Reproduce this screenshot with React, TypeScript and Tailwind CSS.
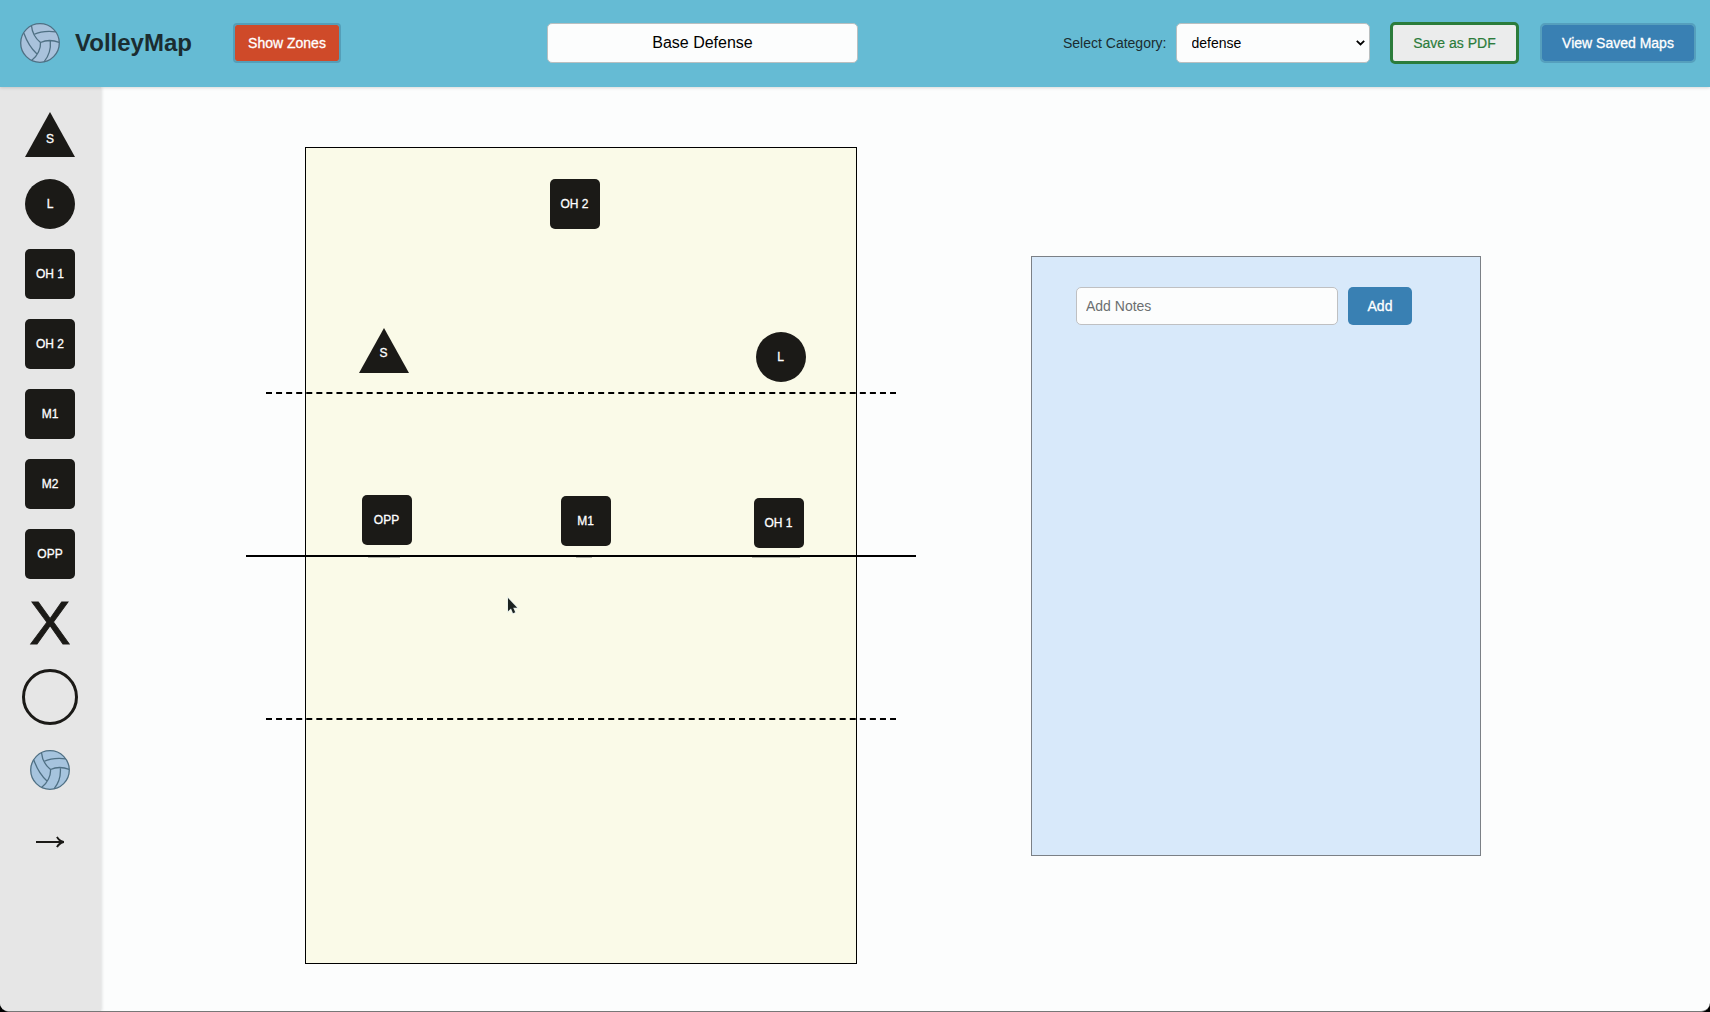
import React from "react";

function Volleyball({ fill }: { fill: string }) {
  return (
    <svg width="40" height="40" viewBox="0 0 40 40" fill="none" stroke="#4f7084" strokeWidth="1.3" className="block shrink-0">
      <circle cx="20" cy="20" r="19.3" fill={fill} />
      <path d="M11.5 2.7C12 8.5 15 15 20.5 19.5M20.5 19.5C21 25.5 17.5 33 11.8 37.3M20.5 19.5C26.5 16.8 33 17 39.2 19.4M13.8 11.5C20 8.6 28.5 7.8 35.8 8.8M3.8 10C6.5 17.5 11.5 26 17 31M30.3 17.6C31 25.5 28.5 33.5 24 38.8" />
    </svg>
  );
}

type Kind = "triangle" | "circle" | "square";

function Token({ kind, label, raised = false }: { kind: Kind; label: string; raised?: boolean }) {
  if (kind === "triangle") {
    return (
      <div className="relative h-[45px] w-[50px] text-xs font-medium text-white">
        <svg width="50" height="45" viewBox="0 0 50 45" className="block">
          <path d="M25 0L50 45H0Z" fill="#1b1a17" />
        </svg>
        <span
          className={
            "absolute left-0 text-center leading-4 [-webkit-text-stroke:0.3px_white] " +
            (raised ? "top-[17px] w-[49px]" : "top-[19px] w-[50px]")
          }
        >
          {label}
        </span>
      </div>
    );
  }
  return (
    <div
      className={
        "flex size-[50px] items-center justify-center bg-[#1b1a17] text-xs text-white [-webkit-text-stroke:0.3px_white] " +
        (kind === "circle" ? "rounded-full" : "rounded-[5px]") +
        (raised ? " pr-px" : "")
      }
    >
      {label}
    </div>
  );
}

const palette: { kind: Kind; label: string }[] = [
  { kind: "circle", label: "L" },
  { kind: "square", label: "OH 1" },
  { kind: "square", label: "OH 2" },
  { kind: "square", label: "M1" },
  { kind: "square", label: "M2" },
  { kind: "square", label: "OPP" },
];

const placed: { kind: Kind; label: string; pos: string }[] = [
  { kind: "square", label: "OH 2", pos: "left-[244px] top-[31px]" },
  { kind: "triangle", label: "S", pos: "left-[53px] top-[180px]" },
  { kind: "circle", label: "L", pos: "left-[450px] top-[184px]" },
  { kind: "square", label: "OPP", pos: "left-[56px] top-[347px]" },
  { kind: "square", label: "M1", pos: "left-[255px] top-[348px]" },
  { kind: "square", label: "OH 1", pos: "left-[448px] top-[350px]" },
];

function DashedLine() {
  return (
    <svg width="630" height="2" className="block">
      <line x1="0" y1="1" x2="630" y2="1" stroke="#000" strokeWidth="2" strokeDasharray="6 4.065" />
    </svg>
  );
}

function Header() {
  return (
    <header className="relative z-10 flex h-[87px] shrink-0 items-center bg-[#65bbd4] pb-[2px] shadow-[0_1px_3px_rgba(0,0,0,0.15)]">
      <div className="flex w-[233px] items-center gap-[15px] pl-5">
        <Volleyball fill="#a9c2dc" />
        <h1 className="text-2xl font-bold text-[#1b2c30]">VolleyMap</h1>
      </div>
      <button className="h-10 w-[108px] rounded border-2 border-[#559eb8] bg-[#cf4a29] bg-clip-padding text-sm text-white [-webkit-text-stroke:0.3px_white]">
        Show Zones
      </button>
      <input
        defaultValue="Base Defense"
        className="ml-[206px] h-10 w-[311px] rounded-[5px] border border-[#b9bfc0] bg-[#fcfdfd] text-center text-base text-black outline-none"
      />
      <label className="ml-[205px] text-sm text-[#1b2c30]">Select Category:</label>
      <div className="relative ml-[9px]">
        <select className="block h-10 w-[194px] appearance-none rounded-[5px] border border-[#b9bfc0] bg-[#fcfdfd] pl-[15px] text-sm text-black">
          <option>defense</option>
        </select>
        <svg width="9" height="6" viewBox="0 0 9 6" className="absolute top-[17.5px] right-[4.5px]">
          <path d="M0.8 0.9L4.5 4.5L8.2 0.9" fill="none" stroke="#000" strokeWidth="1.8" />
        </svg>
      </div>
      <button className="ml-5 h-[42px] w-[129px] rounded-[5px] border-3 border-[#2b7c3b] bg-[#ebecec] pl-px text-sm text-[#2b7c3b]">
        <span className="[-webkit-text-stroke:0.2px_#2b7c3b]">Save as PDF</span>
      </button>
      <button className="ml-[21px] h-10 w-[156px] rounded-[5px] border-2 border-[#559fbd] bg-[#3980b3] bg-clip-padding pl-px text-sm text-white [-webkit-text-stroke:0.3px_white]">
        View Saved Maps
      </button>
    </header>
  );
}

function Sidebar() {
  return (
    <aside className="flex w-[101px] shrink-0 flex-col items-center bg-[#e6e6e6] pt-[25px] pr-px text-[#1b1a17] shadow-[1px_0_3px_rgba(0,0,0,0.12)]">
      <Token kind="triangle" label="S" />
      <div className="mt-[22px] flex flex-col gap-5">
        {palette.map((t) => (
          <Token key={t.label} {...t} />
        ))}
      </div>
      <div className="mt-[15px] h-[60px] text-[62px] leading-[58px] [-webkit-text-stroke:0.9px_#1b1a17]">X</div>
      <div className="mt-[15px] size-14 rounded-full border-3 border-[#1b1a17]" />
      <div className="mt-[25px]">
        <Volleyball fill="#a6c4de" />
      </div>
      <svg width="28" height="12" viewBox="0 0 28 12" className="mt-[46px] block">
        <path d="M0 6H26.5" stroke="#1b1a17" strokeWidth="2" />
        <path d="M21 0.8C22 3 24.5 5 27.5 6C24.5 7 22 9 21 11.2" fill="none" stroke="#1b1a17" strokeWidth="1.9" />
      </svg>
    </aside>
  );
}

function Court() {
  return (
    <section className="relative mt-[60px] ml-[204px] h-[817px] w-[552px] shrink-0 border border-black bg-[#fafae8]">
      <div className="absolute top-[244px] -left-10">
        <DashedLine />
      </div>
      <div className="absolute top-[407px] -left-[60px] h-[2px] w-[670px] bg-black" />
      <div className="absolute top-[570px] -left-10">
        <DashedLine />
      </div>
      {placed.map((t) => (
        <div key={t.label} className={"absolute " + t.pos}>
          <Token kind={t.kind} label={t.label} raised />
        </div>
      ))}
      <div className="absolute top-[409px] left-[62px] h-px w-8 bg-[#b5b6aa]" />
      <div className="absolute top-[409px] left-[270px] h-px w-4 bg-[#b5b6aa]" />
      <div className="absolute top-[409px] left-[446px] h-px w-12 bg-[#b5b6aa]" />
      <svg width="14" height="20" viewBox="0 0 14 20" className="absolute top-[448px] left-[200px]">
        <path
          d="M2 2V15.3L5 12.5L7 17.2L9.2 16.2L7.2 11.7H11.2Z"
          fill="#1b2220"
          stroke="#e4edec"
          strokeWidth="1.4"
          paintOrder="stroke"
        />
      </svg>
    </section>
  );
}

function Notes() {
  return (
    <section className="mt-[169px] ml-[174px] h-[600px] w-[450px] shrink-0 border border-[#7b8086] bg-[#d8e9fa] pt-[30px] pl-11">
      <div className="flex gap-[10px]">
        <input
          placeholder="Add Notes"
          className="h-[38px] w-[262px] rounded-[5px] border border-[#bfc0c2] bg-[#fcfdfd] pl-[9px] text-sm outline-none placeholder:text-[#6b6f70]"
        />
        <button className="h-[38px] w-16 rounded-[5px] bg-[#3980b3] text-sm text-white [-webkit-text-stroke:0.3px_white]">Add</button>
      </div>
    </section>
  );
}

export default function App() {
  return (
    <div className="h-[1012px] w-[1710px] overflow-hidden bg-black font-['Liberation_Sans',Arial,sans-serif]">
      <div className="flex h-[1012px] flex-col overflow-hidden rounded-b-[9px] border-b border-[#777] bg-[#fcfdfd]">
        <Header />
        <main className="flex min-h-0 flex-1 items-stretch">
          <Sidebar />
          <div className="flex items-start">
            <Court />
            <Notes />
          </div>
        </main>
      </div>
    </div>
  );
}
